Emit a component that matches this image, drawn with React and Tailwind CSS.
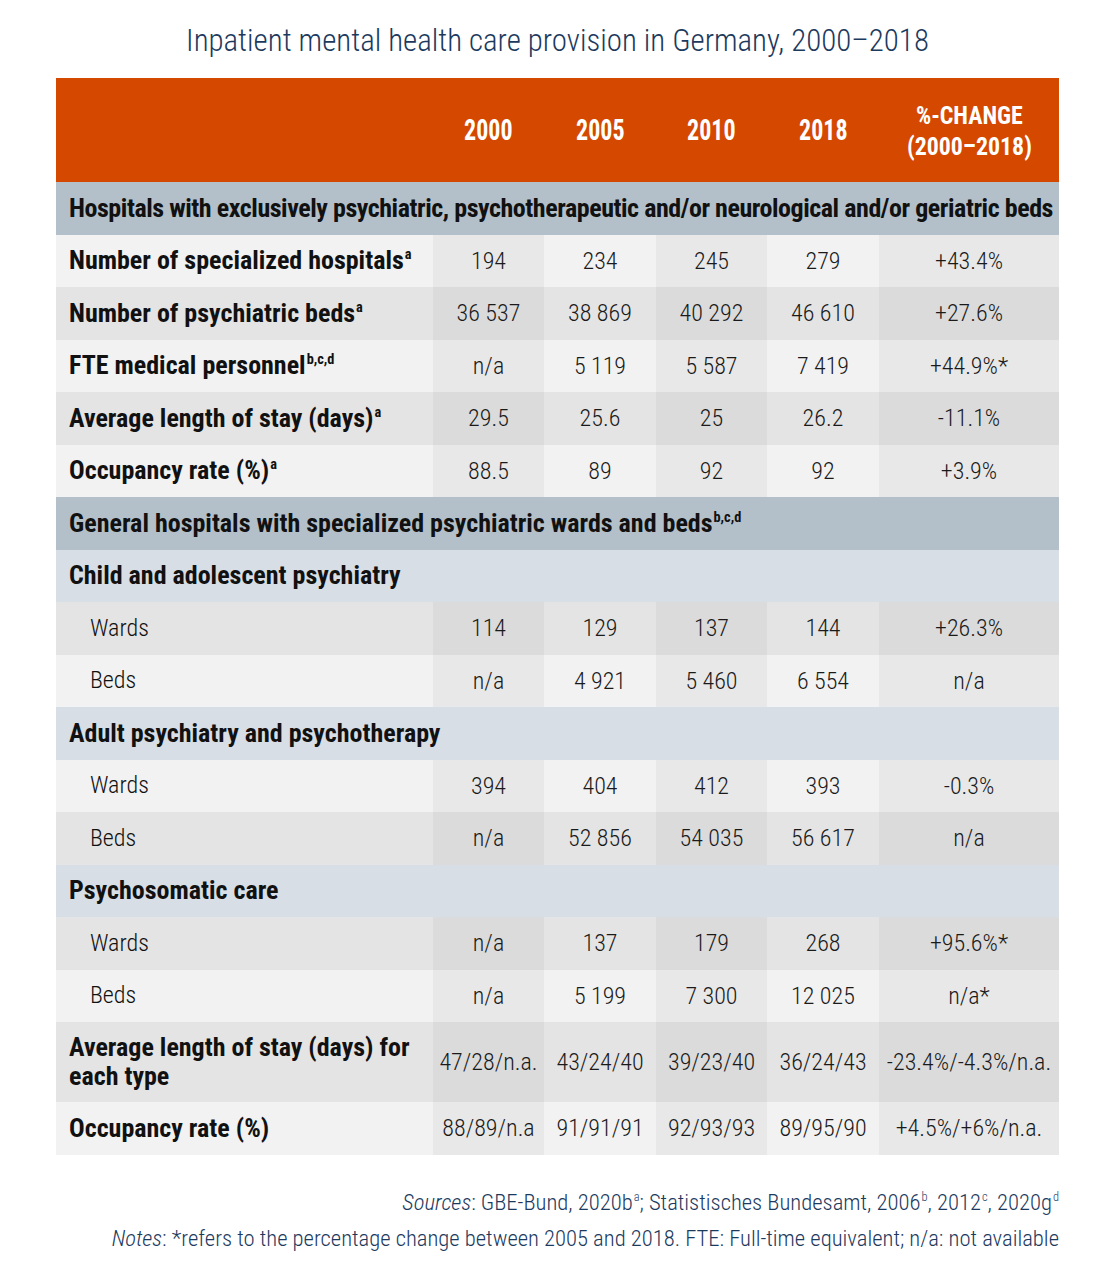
import React from "react";

const LIGHT = ["bg-[#f2f2f2]", "bg-[#e8e8e8]"];
const DARK = ["bg-[#e4e4e4]", "bg-[#dbdbdb]"];

function Sup({ children }) {
  return (
    <span className="relative -top-[0.7em] text-[0.55em] leading-none ml-[1px]">{children}</span>
  );
}

function Row({ label, values, dark, indent, tall }) {
  const c = dark ? DARK : LIGHT;
  const h = tall ? "h-[80px]" : "h-[52.5px]";
  return (
    <>
      <div
        className={`${c[0]} ${h} flex items-center ${
          indent ? "pl-[34px] font-light text-[24px]" : "pl-[13px] font-bold text-[26px]"
        } leading-[29px] text-[#111]`}
      >
        <div>{label}</div>
      </div>
      {values.map((v, i) => (
        <div
          key={i}
          className={`${i % 2 === 0 ? c[1] : c[0]} ${h} flex items-center justify-center text-[24px] font-light text-[#1a1a1a]`}
        >
          {v}
        </div>
      ))}
    </>
  );
}

function Section({ children, sub, tight }) {
  return (
    <div
      className={`col-span-6 h-[52.5px] flex items-center pl-[13px] font-bold text-[26px] text-[#111] ${
        tight ? "tracking-[-0.45px]" : ""
      } ${sub ? "bg-[#d8dee6]" : "bg-[#b3c0ca]"}`}
    >
      <div>{children}</div>
    </div>
  );
}

export default function App() {
  return (
    <div className="w-[1119px] h-[1272px] bg-white font-['Roboto_Condensed','Liberation_Sans_Narrow','DejaVu_Sans_Condensed',sans-serif]">
      <div className="ml-[56px] w-[1003px]">
        <h1 className="h-[78px] pt-[22px] text-center text-[30.9px] leading-[38px] text-[#1c3a5e] font-light">
          Inpatient mental health care provision in Germany, 2000–2018
        </h1>
        <div className="grid grid-cols-[377px_111px_112px_111px_112px_180px]">
          <div className="col-span-6 grid grid-cols-[377px_111px_112px_111px_112px_180px] h-[104px] bg-[#d54800] text-white font-bold">
            <div />
            {["2000", "2005", "2010", "2018"].map((y) => (
              <div key={y} className="flex items-center justify-center">
                <span className="inline-block scale-x-[0.8] whitespace-nowrap text-[30px] leading-[36px]">
                  {y}
                </span>
              </div>
            ))}
            <div className="flex flex-col items-center justify-center text-[26.5px] leading-[31px]">
              <span className="inline-block scale-x-[0.9] whitespace-nowrap">%-CHANGE</span>
              <span className="inline-block scale-x-[0.9] whitespace-nowrap">(2000–2018)</span>
            </div>
          </div>

          <Section tight>
            Hospitals with exclusively psychiatric, psychotherapeutic and/or neurological and/or geriatric beds
          </Section>
          <Row
            label={<>Number of specialized hospitals<Sup>a</Sup></>}
            values={["194", "234", "245", "279", "+43.4%"]}
          />
          <Row
            dark
            label={<>Number of psychiatric beds<Sup>a</Sup></>}
            values={["36 537", "38 869", "40 292", "46 610", "+27.6%"]}
          />
          <Row
            label={<>FTE medical personnel<Sup>b,c,d</Sup></>}
            values={["n/a", "5 119", "5 587", "7 419", "+44.9%*"]}
          />
          <Row
            dark
            label={<>Average length of stay (days)<Sup>a</Sup></>}
            values={["29.5", "25.6", "25", "26.2", "-11.1%"]}
          />
          <Row
            label={<>Occupancy rate (%)<Sup>a</Sup></>}
            values={["88.5", "89", "92", "92", "+3.9%"]}
          />
          <Section>
            General hospitals with specialized psychiatric wards and beds<Sup>b,c,d</Sup>
          </Section>
          <Section sub>Child and adolescent psychiatry</Section>
          <Row dark indent label="Wards" values={["114", "129", "137", "144", "+26.3%"]} />
          <Row indent label="Beds" values={["n/a", "4 921", "5 460", "6 554", "n/a"]} />
          <Section sub>Adult psychiatry and psychotherapy</Section>
          <Row indent label="Wards" values={["394", "404", "412", "393", "-0.3%"]} />
          <Row dark indent label="Beds" values={["n/a", "52 856", "54 035", "56 617", "n/a"]} />
          <Section sub>Psychosomatic care</Section>
          <Row dark indent label="Wards" values={["n/a", "137", "179", "268", "+95.6%*"]} />
          <Row indent label="Beds" values={["n/a", "5 199", "7 300", "12 025", "n/a*"]} />
          <Row
            dark
            tall
            label={<>Average length of stay (days) for<br />each type</>}
            values={["47/28/n.a.", "43/24/40", "39/23/40", "36/24/43", "-23.4%/-4.3%/n.a."]}
          />
          <Row
            label="Occupancy rate (%)"
            values={["88/89/n.a", "91/91/91", "92/93/93", "89/95/90", "+4.5%/+6%/n.a."]}
          />
        </div>
        <div className="mt-[30px] text-right text-[22.6px] font-light leading-[36px] text-[#1c3a5e]">
          <div>
            <i>Sources</i>: GBE-Bund, 2020b<Sup>a</Sup>; Statistisches Bundesamt, 2006<Sup>b</Sup>, 2012<Sup>c</Sup>, 2020g<Sup>d</Sup>
          </div>
          <div>
            <i>Notes</i>: *refers to the percentage change between 2005 and 2018. FTE: Full-time equivalent; n/a: not available
          </div>
        </div>
      </div>
    </div>
  );
}
